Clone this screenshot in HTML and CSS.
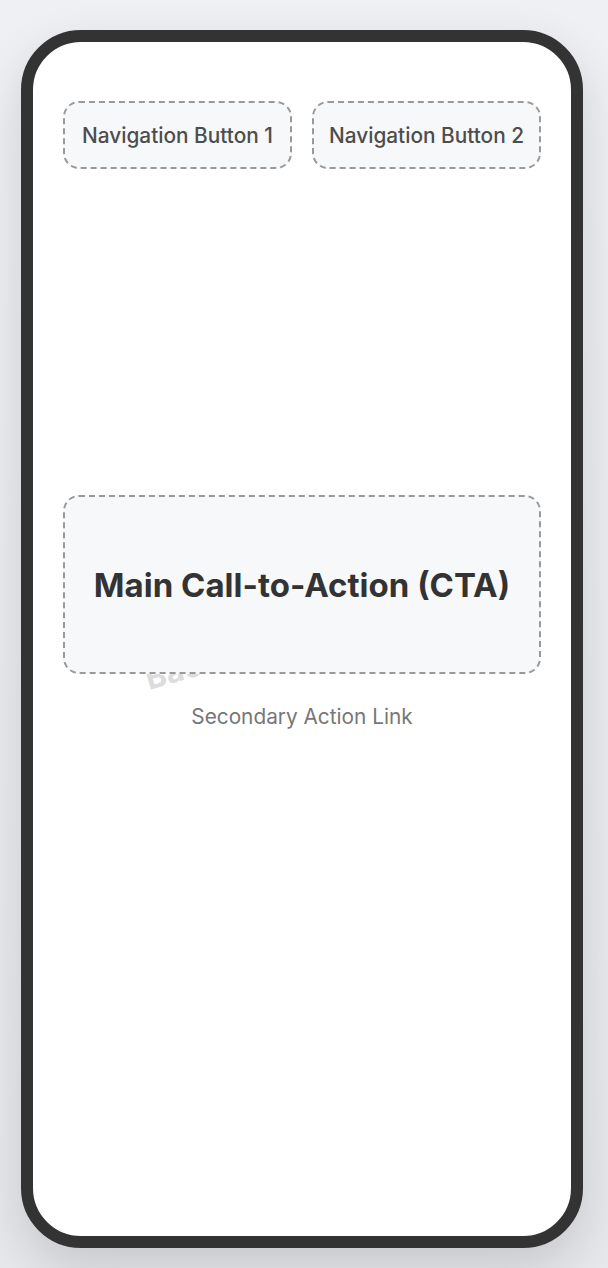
FILE: index.html
```html
<!DOCTYPE html>
<html lang="en">
<head>
<meta charset="utf-8">
<title>Mobile Wireframe</title>
<link rel="stylesheet" href="styles.css">
</head>
<body>
  <div class="phone">
    <div class="screen">
      <nav class="nav">
        <div class="nav-btn">Navigation Button 1</div>
        <div class="nav-btn">Navigation Button 2</div>
      </nav>
      <main class="main">
        <span class="watermark">Background</span>
        <div class="cta">Main Call-to-Action (CTA)</div>
        <a class="secondary">Secondary Action Link</a>
      </main>
    </div>
  </div>
</body>
</html>
```

FILE: styles.css
```css
* { box-sizing: border-box; }

html, body {
  margin: 0;
  height: 100%;
}

body {
  background: linear-gradient(180deg, #eef0f4 0%, #e7e8ec 100%);
  font-family: Inter, "Noto Sans", "Liberation Sans", sans-serif;
  padding: 30px 0 0 21px;
}

.phone {
  width: 562px;
  height: 1218px;
  border: 12px solid #333333;
  border-radius: 60px;
  background: #ffffff;
  box-shadow: 0 20px 50px rgba(0, 0, 0, 0.14);
  overflow: hidden;
}

.screen {
  padding: 59px 30px 0 30px;
  display: flex;
  flex-direction: column;
}

.nav {
  display: flex;
  gap: 20px;
}

.nav-btn {
  flex: 1;
  height: 68px;
  display: flex;
  align-items: center;
  justify-content: center;
  border: 2px dashed #999999;
  border-radius: 16px;
  background: #f7f8fa;
  color: #4d4d4d;
  font-size: 20.8px;
  font-weight: 500;
}

.main {
  position: relative;
  margin-top: 326px;
  display: flex;
  flex-direction: column;
  align-items: center;
}

.watermark {
  position: absolute;
  left: 86px;
  top: 168px;
  font-size: 31px;
  font-weight: 700;
  color: #dcdcdc;
  transform: rotate(-16deg);
  transform-origin: 0 27px;
  line-height: 1;
  white-space: nowrap;
}

.cta {
  position: relative;
  width: 100%;
  height: 179px;
  display: flex;
  align-items: center;
  justify-content: center;
  border: 2px dashed #999999;
  border-radius: 16px;
  background: #f7f8fa;
  color: #333333;
  font-size: 33px;
  font-weight: 700;
}

.secondary {
  margin-top: 30px;
  color: #777777;
  font-size: 20.8px;
  line-height: 26px;
}
```
